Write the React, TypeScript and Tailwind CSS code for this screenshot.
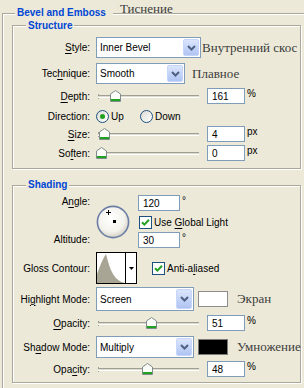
import React from "react";

const U = ({ children }: { children: React.ReactNode }) => (
  <span className="underline decoration-1 underline-offset-[2px]">{children}</span>
);

function Label({ children }: { children: React.ReactNode }) {
  return <div className="w-[77px] shrink-0 text-right whitespace-nowrap">{children}</div>;
}

function Combo({ className, text }: { className: string; text: string }) {
  return (
    <div className={"flex shrink-0 border border-[#7f9db9] bg-white " + className}>
      <div className="flex flex-1 items-center overflow-hidden whitespace-nowrap pl-[3px]">{text}</div>
      <div className="my-[1px] mr-[1px] flex w-[16px] items-center justify-center rounded-[2px] border border-[#c6d5fb] bg-linear-to-b from-[#dbe5fc] to-[#b0c4f3]">
        <svg width="9" height="6" viewBox="0 0 9 6">
          <path d="M1 1 L4.5 4.5 L8 1" fill="none" stroke="#4d6185" strokeWidth="2" />
        </svg>
      </div>
    </div>
  );
}

function Thumb() {
  return (
    <svg width="11" height="12" viewBox="0 0 11 12">
      <path d="M0.5 4 L5.5 0.5 L10.5 4 V11.5 H0.5 Z" fill="#fbfbf7" stroke="#7f8c8d" />
      <rect x="1" y="9" width="9" height="2" fill="#21a121" />
    </svg>
  );
}

function Slider({ pos }: { pos: number }) {
  return (
    <div className="relative ml-[6px] h-[16px] w-[103px] shrink-0">
      <div className="absolute left-[2px] top-[6px] h-[5px] border-l border-[#a09d92]" />
      <div className="absolute left-[2px] right-0 top-[7px] h-[3px] border-y border-t-[#a09d92] border-b-white bg-[#dedbcf]" />
      <div className="absolute top-[2px]" style={{ left: pos }}>
        <Thumb />
      </div>
    </div>
  );
}

function NumBox({ value, className }: { value: string; className: string }) {
  return (
    <div className={"flex shrink-0 items-center border border-[#7f9db9] bg-white pl-[4px] " + className}>
      {value}
    </div>
  );
}

function Unit({ children }: { children: React.ReactNode }) {
  return <span className="ml-[2px] self-start leading-[12px]">{children}</span>;
}

function Check() {
  return (
    <span className="flex h-[13px] w-[13px] shrink-0 items-center justify-center border border-[#1c5180] bg-white">
      <svg width="9" height="9" viewBox="0 0 9 9">
        <path d="M1 4.2 L3.4 6.6 L8 1.8" fill="none" stroke="#21a121" strokeWidth="2" />
      </svg>
    </span>
  );
}

function Radio({ checked }: { checked?: boolean }) {
  return (
    <span className="flex h-[13px] w-[13px] shrink-0 items-center justify-center rounded-full border border-[#1c5180] bg-linear-to-br from-[#dcdbd3] to-white">
      {checked && <span className="h-[5px] w-[5px] rounded-full bg-[#21a121]" />}
    </span>
  );
}

const ru = "font-['Liberation_Serif',serif] text-[13px] leading-[14px] text-[#3c3c3c] whitespace-nowrap";
const legend =
  "absolute bg-[#ece9d8] px-[2px] text-[10px] font-bold leading-[12px] text-[#0046d5] whitespace-nowrap";

export default function App() {
  return (
    <div className="relative h-[388px] w-[304px] overflow-hidden bg-[#ece9d8] pl-[2px] pt-[13px] font-['Liberation_Sans',Arial,sans-serif] text-[10px] leading-[13px] text-black">
      <div className="relative h-[400px] w-[320px] border border-[#aca899] shadow-[inset_1px_1px_0_#fff]">
        <span className={legend + " left-[12px] top-[-7px] pr-[7px]"}>Bevel and Emboss</span>

        {/* Structure */}
        <div className="relative ml-[9px] mt-[11px] w-[289px] border border-[#aca899] pb-[7px] pt-[11px] shadow-[inset_1px_1px_0_#fff,1px_1px_0_#fff]">
          <span className={legend + " left-[13px] top-[-6px]"}>Structure</span>

          <div className="flex h-[21px] items-center">
            <Label>
              <U>S</U>tyle:
            </Label>
            <Combo className="ml-[6px] h-[21px] w-[105px]" text="Inner Bevel" />
            <span className={"ml-[1px] " + ru}>Внутренний скос</span>
          </div>

          <div className="mt-[5px] flex h-[21px] items-center">
            <Label>
              Tec<U>h</U>nique:
            </Label>
            <Combo className="ml-[6px] h-[21px] w-[89px]" text="Smooth" />
            <span className={"ml-[7px] " + ru}>Плавное</span>
          </div>

          <div className="mt-[4px] flex h-[16px] items-center">
            <Label>
              <U>D</U>epth:
            </Label>
            <Slider pos={14} />
            <NumBox value="161" className="ml-[8px] h-[16px] w-[38px]" />
            <Unit>%</Unit>
          </div>

          <div className="mt-[4px] flex h-[16px] items-center">
            <Label>Direction:</Label>
            <div className="ml-[6px] flex w-[44px] items-center">
              <Radio checked />
              <span className="ml-[2px]">Up</span>
            </div>
            <div className="flex items-center">
              <Radio />
              <span className="ml-[2px]">Down</span>
            </div>
          </div>

          <div className="mt-[2px] flex h-[16px] items-center">
            <Label>
              <U>S</U>ize:
            </Label>
            <Slider pos={3} />
            <NumBox value="4" className="ml-[8px] h-[16px] w-[38px]" />
            <Unit>px</Unit>
          </div>

          <div className="mt-[3px] flex h-[16px] items-center">
            <Label>
              So<U>f</U>ten:
            </Label>
            <Slider pos={0} />
            <NumBox value="0" className="ml-[8px] h-[16px] w-[38px]" />
            <Unit>px</Unit>
          </div>
        </div>

        {/* Shading */}
        <div className="relative ml-[9px] mt-[16px] w-[289px] border border-[#aca899] pb-[5px] pt-[9px] shadow-[inset_1px_1px_0_#fff,1px_1px_0_#fff]">
          <span className={legend + " left-[13px] top-[-7px]"}>Shading</span>

          <div className="flex h-[53px]">
            <div className="flex w-[77px] shrink-0 flex-col justify-between text-right">
              <div className="h-[16px] leading-[14px]">
                A<U>n</U>gle:
              </div>
              <div className="h-[16px] leading-[16px]">Altitude:</div>
            </div>
            <div className="ml-[6px] mt-[10px] h-[34px] w-[34px] shrink-0">
              <svg width="34" height="34" viewBox="0 0 34 34">
                <defs>
                  <radialGradient id="dialg" cx="45%" cy="40%" r="60%">
                    <stop offset="0" stopColor="#ffffff" />
                    <stop offset="0.7" stopColor="#f3f2ec" />
                    <stop offset="1" stopColor="#d3d0c3" />
                  </radialGradient>
                </defs>
                <circle cx="17" cy="17" r="15.6" fill="url(#dialg)" stroke="#6b7ea6" strokeWidth="1.6" />
                <rect x="17" y="15" width="3" height="3" fill="#000" />
                <path d="M9.5 7.5h5M12 5v5" stroke="#000" strokeWidth="1" shapeRendering="crispEdges" />
              </svg>
            </div>
            <div className="ml-[8px] flex flex-col">
              <div className="flex h-[16px] items-center">
                <NumBox value="120" className="h-[16px] w-[42px]" />
                <Unit>°</Unit>
              </div>
              <div className="ml-[1px] mt-[5px] flex h-[13px] items-center">
                <Check />
                <span className="ml-[2px] whitespace-nowrap">
                  Use <U>G</U>lobal Light
                </span>
              </div>
              <div className="mt-[3px] flex h-[16px] items-center">
                <NumBox value="30" className="h-[16px] w-[42px]" />
                <Unit>°</Unit>
              </div>
            </div>
          </div>

          <div className="mt-[4px] flex h-[32px] items-center">
            <Label>Gloss Contour:</Label>
            <div className="ml-[6px] flex h-[32px] w-[41px] shrink-0 border border-black bg-white">
              <div className="w-[29px] border-r border-black">
                <svg width="28" height="30" viewBox="0 0 28 30">
                  <path d="M0 30 L0 21 C3 13 6 5 9 1 C11 9 13 16 16 21 C19 26 23 29 28 30 Z" fill="#a8a595" />
                </svg>
              </div>
              <div className="flex flex-1 items-center justify-center">
                <svg width="5" height="3" viewBox="0 0 5 3">
                  <path d="M0 0 H5 L2.5 3 Z" fill="#000" />
                </svg>
              </div>
            </div>
            <div className="ml-[15px] flex items-center">
              <Check />
              <span className="ml-[2px]">
                Anti-a<U>l</U>iased
              </span>
            </div>
          </div>

          <div className="mt-[3px] flex h-[24px] items-center">
            <Label>
              Hi<U>g</U>hlight Mode:
            </Label>
            <Combo className="ml-[6px] h-[24px] w-[98px]" text="Screen" />
            <div className="ml-[4px] h-[16px] w-[30px] shrink-0 border border-[#8d8d8d] bg-white" />
            <span className={"ml-[9px] " + ru}>Экран</span>
          </div>

          <div className="mt-[4px] flex h-[16px] items-center">
            <Label>
              <U>O</U>pacity:
            </Label>
            <Slider pos={50} />
            <NumBox value="51" className="ml-[8px] h-[16px] w-[38px]" />
            <Unit>%</Unit>
          </div>

          <div className="mt-[5px] flex h-[22px] items-center">
            <Label>
              Sh<U>a</U>dow Mode:
            </Label>
            <Combo className="ml-[6px] h-[22px] w-[98px]" text="Multiply" />
            <div className="ml-[4px] h-[16px] w-[30px] shrink-0 border border-[#7a7a7a] bg-black" />
            <span className={"ml-[9px] " + ru}>Умножение</span>
          </div>

          <div className="mt-[3px] flex h-[16px] items-center">
            <Label>
              Opa<U>c</U>ity:
            </Label>
            <Slider pos={46} />
            <NumBox value="48" className="ml-[8px] h-[16px] w-[38px]" />
            <Unit>%</Unit>
          </div>
        </div>
      </div>

      <div className={"absolute left-[120px] top-[2px] " + ru}>Тиснение</div>
    </div>
  );
}
